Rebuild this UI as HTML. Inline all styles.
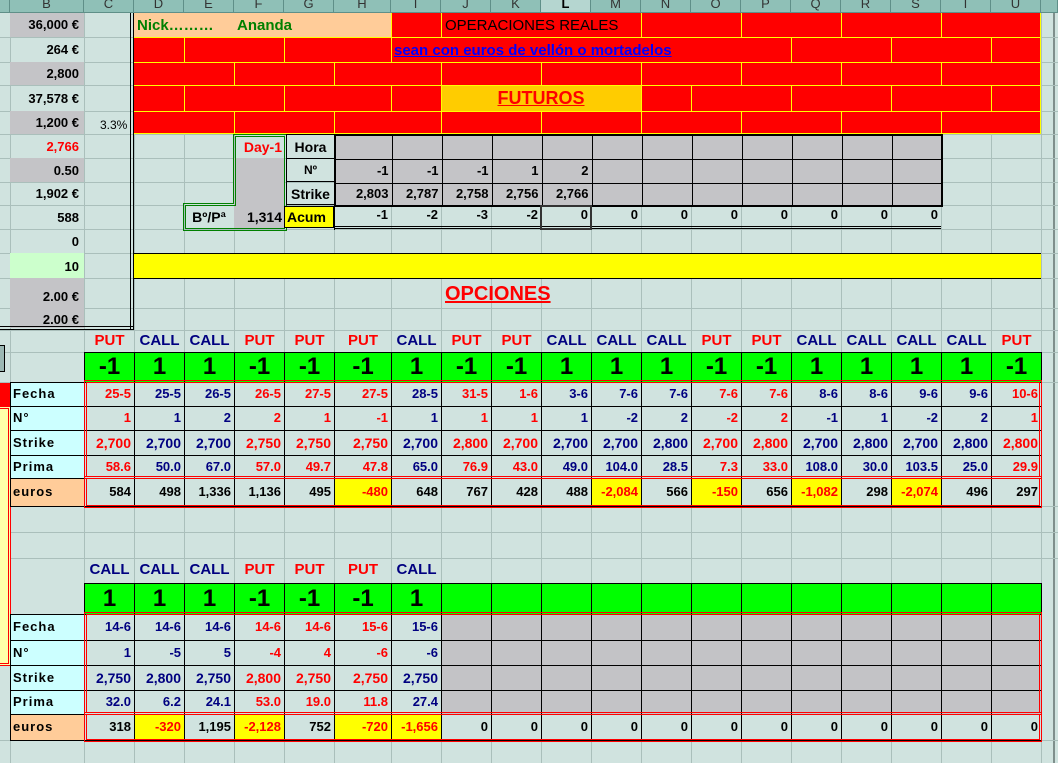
<!DOCTYPE html>
<html><head><meta charset="utf-8">
<style>
*{margin:0;padding:0;box-sizing:border-box}
body{width:1058px;height:763px;overflow:hidden;background:#d0e3df;position:relative;font:bold 13px "Liberation Sans",Arial,sans-serif;color:#000}
.a{position:absolute}
.v{position:absolute;width:1px;background:#aabfbb}
.h{position:absolute;height:1px;background:#aabfbb}
.yv{position:absolute;width:1px;background:#ffff00}
.yh{position:absolute;height:1px;background:#ffff00;left:134px;width:906px}
.hd{position:absolute;top:0;height:13px;background:#8fc0b7;border-right:1px solid #5f8f88;border-bottom:1px solid #5f8f88;overflow:hidden;text-align:center;font:13px "Liberation Sans",sans-serif;line-height:8px;color:#333}
.bc{position:absolute;left:10px;width:74px;text-align:right;padding-right:5px}
table{position:absolute;border-collapse:collapse;table-layout:fixed}
td{border:1px solid #000;padding:0 3px;text-align:right;white-space:nowrap;overflow:hidden;line-height:14px}
td.n{border:none}
tr.l td{border:none;text-align:center;font-size:15px}
tr.g td{background:#00ff00;text-align:center;font-size:24px;line-height:24px}
td.lb{background:#ccffff;text-align:left;letter-spacing:1px;padding-left:2px}
td.eu{background:#ffcc99;text-align:left;letter-spacing:1px;padding-left:2px}
.r{color:#ff0000}.b{color:#000080}
td.y{background:#ffff00;color:#ff0000}
td.gr{background:#c3c3c6}
.rf{position:absolute;border:3px double #ff0000}
</style></head><body>

<div class="v" style="left:10px;top:13px;height:750px"></div>
<div class="v" style="left:84px;top:13px;height:750px"></div>
<div class="v" style="left:134px;top:13px;height:750px"></div>
<div class="v" style="left:184px;top:13px;height:750px"></div>
<div class="v" style="left:234px;top:13px;height:750px"></div>
<div class="v" style="left:284px;top:13px;height:750px"></div>
<div class="v" style="left:334px;top:13px;height:750px"></div>
<div class="v" style="left:391px;top:13px;height:750px"></div>
<div class="v" style="left:441px;top:13px;height:750px"></div>
<div class="v" style="left:491px;top:13px;height:750px"></div>
<div class="v" style="left:541px;top:13px;height:750px"></div>
<div class="v" style="left:591px;top:13px;height:750px"></div>
<div class="v" style="left:641px;top:13px;height:750px"></div>
<div class="v" style="left:691px;top:13px;height:750px"></div>
<div class="v" style="left:741px;top:13px;height:750px"></div>
<div class="v" style="left:791px;top:13px;height:750px"></div>
<div class="v" style="left:841px;top:13px;height:750px"></div>
<div class="v" style="left:891px;top:13px;height:750px"></div>
<div class="v" style="left:941px;top:13px;height:750px"></div>
<div class="v" style="left:991px;top:13px;height:750px"></div>
<div class="v" style="left:1041px;top:13px;height:750px"></div>
<div class="a" style="left:1053px;top:13px;width:2px;height:750px;background:#7f8f8c"></div>
<div class="h" style="left:0;width:1058px;top:37px"></div>
<div class="h" style="left:0;width:1058px;top:62px"></div>
<div class="h" style="left:0;width:1058px;top:85px"></div>
<div class="h" style="left:0;width:1058px;top:111px"></div>
<div class="h" style="left:0;width:1058px;top:134px"></div>
<div class="h" style="left:0;width:1058px;top:158px"></div>
<div class="h" style="left:0;width:1058px;top:182px"></div>
<div class="h" style="left:0;width:1058px;top:205px"></div>
<div class="h" style="left:0;width:1058px;top:229px"></div>
<div class="h" style="left:0;width:1058px;top:253px"></div>
<div class="h" style="left:0;width:1058px;top:278px"></div>
<div class="h" style="left:0;width:1058px;top:308px"></div>
<div class="h" style="left:0;width:1058px;top:330px"></div>
<div class="h" style="left:0;width:1058px;top:352px"></div>
<div class="h" style="left:0;width:1058px;top:382px"></div>
<div class="h" style="left:0;width:1058px;top:506px"></div>
<div class="h" style="left:0;width:1058px;top:532px"></div>
<div class="h" style="left:0;width:1058px;top:558px"></div>
<div class="h" style="left:0;width:1058px;top:740px"></div>

<div class="hd" style="left:0;width:10px"></div>
<div class="hd" style="left:10px;width:74px">B</div>
<div class="hd" style="left:84px;width:50px">C</div>
<div class="hd" style="left:134px;width:50px">D</div>
<div class="hd" style="left:184px;width:50px">E</div>
<div class="hd" style="left:234px;width:50px">F</div>
<div class="hd" style="left:284px;width:50px">G</div>
<div class="hd" style="left:334px;width:57px">H</div>
<div class="hd" style="left:391px;width:50px">I</div>
<div class="hd" style="left:441px;width:50px">J</div>
<div class="hd" style="left:491px;width:50px">K</div>
<div class="hd" style="left:541px;width:50px;background:#b5d6d0;font-weight:bold;color:#000">L</div>
<div class="hd" style="left:591px;width:50px">M</div>
<div class="hd" style="left:641px;width:50px">N</div>
<div class="hd" style="left:691px;width:50px">O</div>
<div class="hd" style="left:741px;width:50px">P</div>
<div class="hd" style="left:791px;width:50px">Q</div>
<div class="hd" style="left:841px;width:50px">R</div>
<div class="hd" style="left:891px;width:50px">S</div>
<div class="hd" style="left:941px;width:50px">T</div>
<div class="hd" style="left:991px;width:50px">U</div>
<div class="hd" style="left:1041px;width:17px"></div>

<div class="a" style="left:10px;top:13px;width:74px;height:24px;background:#c4c4c7"></div>
<div class="a" style="left:10px;top:62px;width:74px;height:23px;background:#c4c4c7"></div>
<div class="a" style="left:10px;top:111px;width:74px;height:23px;background:#c4c4c7"></div>
<div class="a" style="left:10px;top:158px;width:74px;height:24px;background:#c4c4c7"></div>
<div class="a" style="left:10px;top:253px;width:74px;height:25px;background:#ccffcc"></div>
<div class="a" style="left:10px;top:278px;width:74px;height:50px;background:#c4c4c7"></div>
<div class="a" style="left:0;top:326px;width:134px;height:4px;border-top:1px solid #000;border-bottom:1px solid #000"></div>
<div class="a" style="left:130px;top:13px;width:4px;height:317px;border-left:1px solid #000;border-right:1px solid #000"></div>
<div class="bc" style="top:17px">36,000 €</div>
<div class="bc" style="top:42px">264 €</div>
<div class="bc" style="top:66px">2,800</div>
<div class="bc" style="top:91px">37,578 €</div>
<div class="bc" style="top:115px">1,200 €</div>
<div class="a" style="left:100px;top:118px;font:12px 'Liberation Sans',sans-serif">3.3%</div>
<div class="bc" style="top:139px;color:#ff0000">2,766</div>
<div class="bc" style="top:163px">0.50</div>
<div class="bc" style="top:186px">1,902 €</div>
<div class="bc" style="top:210px">588</div>
<div class="bc" style="top:234px">0</div>
<div class="bc" style="top:259px">10</div>
<div class="bc" style="top:289px">2.00 €</div>
<div class="bc" style="top:312px">2.00 €</div>

<div class="a" style="left:134px;top:13px;width:906px;height:121px;background:#ff0000"></div>
<div class="a" style="left:134px;top:13px;width:257px;height:24px;background:#ffcc99"></div>
<div class="a" style="left:441px;top:85px;width:200px;height:26px;background:#ffcc00"></div>
<div class="yh" style="top:37px"></div>
<div class="yh" style="top:62px"></div>
<div class="yh" style="top:85px"></div>
<div class="yh" style="top:111px"></div>
<div class="yh" style="top:133px"></div>
<div class="yv" style="left:1040px;top:13px;height:121px"></div>
<div class="yv" style="left:391px;top:13px;height:24px"></div>
<div class="yv" style="left:441px;top:13px;height:24px"></div>
<div class="yv" style="left:641px;top:13px;height:24px"></div>
<div class="yv" style="left:741px;top:13px;height:24px"></div>
<div class="yv" style="left:841px;top:13px;height:24px"></div>
<div class="yv" style="left:941px;top:13px;height:24px"></div>
<div class="yv" style="left:184px;top:37px;height:25px"></div>
<div class="yv" style="left:284px;top:37px;height:25px"></div>
<div class="yv" style="left:391px;top:37px;height:25px"></div>
<div class="yv" style="left:791px;top:37px;height:25px"></div>
<div class="yv" style="left:891px;top:37px;height:25px"></div>
<div class="yv" style="left:991px;top:37px;height:25px"></div>
<div class="yv" style="left:234px;top:62px;height:23px"></div>
<div class="yv" style="left:334px;top:62px;height:23px"></div>
<div class="yv" style="left:441px;top:62px;height:23px"></div>
<div class="yv" style="left:541px;top:62px;height:23px"></div>
<div class="yv" style="left:641px;top:62px;height:23px"></div>
<div class="yv" style="left:741px;top:62px;height:23px"></div>
<div class="yv" style="left:841px;top:62px;height:23px"></div>
<div class="yv" style="left:941px;top:62px;height:23px"></div>
<div class="yv" style="left:184px;top:85px;height:26px"></div>
<div class="yv" style="left:284px;top:85px;height:26px"></div>
<div class="yv" style="left:391px;top:85px;height:26px"></div>
<div class="yv" style="left:441px;top:85px;height:26px"></div>
<div class="yv" style="left:641px;top:85px;height:26px"></div>
<div class="yv" style="left:691px;top:85px;height:26px"></div>
<div class="yv" style="left:791px;top:85px;height:26px"></div>
<div class="yv" style="left:891px;top:85px;height:26px"></div>
<div class="yv" style="left:991px;top:85px;height:26px"></div>
<div class="yv" style="left:234px;top:111px;height:23px"></div>
<div class="yv" style="left:334px;top:111px;height:23px"></div>
<div class="yv" style="left:441px;top:111px;height:23px"></div>
<div class="yv" style="left:541px;top:111px;height:23px"></div>
<div class="yv" style="left:641px;top:111px;height:23px"></div>
<div class="yv" style="left:741px;top:111px;height:23px"></div>
<div class="yv" style="left:841px;top:111px;height:23px"></div>
<div class="yv" style="left:941px;top:111px;height:23px"></div>
<div class="a" style="left:137px;top:17px;color:#008000;font-size:15px">Nick………</div>
<div class="a" style="left:237px;top:17px;color:#008000;font-size:15px">Ananda</div>
<div class="a" style="left:445px;top:17px;font:15px 'Liberation Sans',sans-serif">OPERACIONES REALES</div>
<div class="a" style="left:394px;top:42px;color:#0000ff;font-size:15px;text-decoration:underline">sean con euros de vellón o mortadelos</div>
<div class="a" style="left:441px;top:88px;width:200px;text-align:center;color:#ff0000;font-size:18px;text-decoration:underline">FUTUROS</div>

<div class="a" style="left:234px;top:158px;width:50px;height:47px;background:#c4c4c7"></div>
<div class="a" style="left:234px;top:205px;width:50px;height:24px;background:#c4c4c7"></div>
<svg class="a" style="left:0;top:0" width="400" height="240"><path d="M233.5 134.5H286.5V230.5H183.5V203.5H233.5Z M235.5 136.5H284.5V228.5H185.5V205.5H235.5Z" fill="none" stroke="#008000" stroke-width="1"/></svg>
<div class="a" style="left:234px;top:139px;width:48px;text-align:right;color:#ff0000;font-size:14px">Day-1</div>
<div class="a" style="left:186px;top:209px;width:46px;text-align:center;font-size:14px">Bº/Pª</div>
<div class="a" style="left:234px;top:209px;width:48px;text-align:right;font-size:14px">1,314</div>
<div class="a" style="left:286px;top:134px;width:49px;height:71px;border:1px solid #000"></div>
<div class="a" style="left:286px;top:158px;width:49px;height:24px;border-top:1px solid #000;border-bottom:1px solid #000"></div>
<div class="a" style="left:288px;top:139px;width:45px;text-align:center;font-size:14px">Hora</div>
<div class="a" style="left:288px;top:163px;width:45px;text-align:center;font-size:12px">Nº</div>
<div class="a" style="left:286px;top:186px;width:49px;text-align:center;font-size:14px">Strike</div>
<div class="a" style="left:284px;top:206px;width:50px;height:22px;background:#ffff00;border:1px solid #000;font-size:14px;padding:2px 0 0 2px">Acum</div>
<table style="left:334px;top:134px;width:607px;background:#c4c4c7;border:2px solid #000">
<colgroup><col style="width:57px"><col span="11" style="width:50px"></colgroup>
<tr style="height:24px"><td></td><td></td><td></td><td></td><td></td><td></td><td></td><td></td><td></td><td></td><td></td><td></td></tr>
<tr style="height:24px"><td>-1</td><td>-1</td><td>-1</td><td>1</td><td>2</td><td></td><td></td><td></td><td></td><td></td><td></td><td></td></tr>
<tr style="height:23px"><td>2,803</td><td>2,787</td><td>2,758</td><td>2,756</td><td>2,766</td><td></td><td></td><td></td><td></td><td></td><td></td><td></td></tr>
</table>
<table style="left:334px;top:205px;width:607px;border-bottom:3px double #000">
<colgroup><col style="width:57px"><col span="11" style="width:50px"></colgroup>
<tr style="height:22px"><td class="n">-1</td><td class="n">-2</td><td class="n">-3</td><td class="n">-2</td><td class="n">0</td><td class="n">0</td><td class="n">0</td><td class="n">0</td><td class="n">0</td><td class="n">0</td><td class="n">0</td><td class="n">0</td></tr>
</table>
<div class="a" style="left:334px;top:205px;width:1px;height:25px;background:#000"></div>
<div class="a" style="left:540px;top:205px;width:52px;height:25px;border:2px solid #333"></div>

<div class="a" style="left:134px;top:253px;width:907px;height:26px;background:#ffff00;border-top:1px solid #000;border-bottom:1px solid #000"></div>
<div class="a" style="left:445px;top:283px;color:#ff0000;font-size:20px;text-decoration:underline">OPCIONES</div>

<div class="a" style="left:-3px;top:345px;width:8px;height:27px;background:#9cb8b4;border:1px solid #000"></div>
<div class="a" style="left:0;top:383px;width:10px;height:23px;background:#ff0000"></div>
<div class="a" style="left:0;top:406px;width:11px;height:260px;background:#ffffaa;border:3px double #ff0000;border-left:none"></div>

<table style="left:10px;top:330px;width:1031px">
<colgroup><col style="width:74px"><col span="5" style="width:50px"><col style="width:57px"><col span="13" style="width:50px"></colgroup>
<tr class="l" style="height:22px"><td></td><td class="r">PUT</td><td class="b">CALL</td><td class="b">CALL</td><td class="r">PUT</td><td class="r">PUT</td><td class="r">PUT</td><td class="b">CALL</td><td class="r">PUT</td><td class="r">PUT</td><td class="b">CALL</td><td class="b">CALL</td><td class="b">CALL</td><td class="r">PUT</td><td class="r">PUT</td><td class="b">CALL</td><td class="b">CALL</td><td class="b">CALL</td><td class="b">CALL</td><td class="r">PUT</td></tr>
<tr class="g" style="height:30px"><td class="n" style="background:none"></td><td>-1</td><td>1</td><td>1</td><td>-1</td><td>-1</td><td>-1</td><td>1</td><td>-1</td><td>-1</td><td>1</td><td>1</td><td>1</td><td>-1</td><td>-1</td><td>1</td><td>1</td><td>1</td><td>1</td><td>-1</td></tr>
<tr style="height:24px"><td class="lb">Fecha</td><td class="r">25-5</td><td class="b">25-5</td><td class="b">26-5</td><td class="r">26-5</td><td class="r">27-5</td><td class="r">27-5</td><td class="b">28-5</td><td class="r">31-5</td><td class="r">1-6</td><td class="b">3-6</td><td class="b">7-6</td><td class="b">7-6</td><td class="r">7-6</td><td class="r">7-6</td><td class="b">8-6</td><td class="b">8-6</td><td class="b">9-6</td><td class="b">9-6</td><td class="r">10-6</td></tr>
<tr style="height:24px"><td class="lb">N°</td><td class="r">1</td><td class="b">1</td><td class="b">2</td><td class="r">2</td><td class="r">1</td><td class="r">-1</td><td class="b">1</td><td class="r">1</td><td class="r">1</td><td class="b">1</td><td class="b">-2</td><td class="b">2</td><td class="r">-2</td><td class="r">2</td><td class="b">-1</td><td class="b">1</td><td class="b">-2</td><td class="b">2</td><td class="r">1</td></tr>
<tr style="height:25px;font-size:14px"><td class="lb" style="font-size:13px">Strike</td><td class="r">2,700</td><td class="b">2,700</td><td class="b">2,700</td><td class="r">2,750</td><td class="r">2,750</td><td class="r">2,750</td><td class="b">2,700</td><td class="r">2,800</td><td class="r">2,700</td><td class="b">2,700</td><td class="b">2,700</td><td class="b">2,800</td><td class="r">2,700</td><td class="r">2,800</td><td class="b">2,700</td><td class="b">2,800</td><td class="b">2,700</td><td class="b">2,800</td><td class="r">2,800</td></tr>
<tr style="height:23px"><td class="lb">Prima</td><td class="r">58.6</td><td class="b">50.0</td><td class="b">67.0</td><td class="r">57.0</td><td class="r">49.7</td><td class="r">47.8</td><td class="b">65.0</td><td class="r">76.9</td><td class="r">43.0</td><td class="b">49.0</td><td class="b">104.0</td><td class="b">28.5</td><td class="r">7.3</td><td class="r">33.0</td><td class="b">108.0</td><td class="b">30.0</td><td class="b">103.5</td><td class="b">25.0</td><td class="r">29.9</td></tr>
<tr style="height:28px"><td class="eu">euros</td><td>584</td><td>498</td><td>1,336</td><td>1,136</td><td>495</td><td class="y">-480</td><td>648</td><td>767</td><td>428</td><td>488</td><td class="y">-2,084</td><td>566</td><td class="y">-150</td><td>656</td><td class="y">-1,082</td><td>298</td><td class="y">-2,074</td><td>496</td><td>297</td></tr>
</table>
<div class="rf" style="left:84px;top:380px;width:958px;height:99px"></div>
<div class="rf" style="left:84px;top:476px;width:958px;height:32px"></div>

<table style="left:10px;top:558px;width:1031px">
<colgroup><col style="width:74px"><col span="5" style="width:50px"><col style="width:57px"><col span="13" style="width:50px"></colgroup>
<tr class="l" style="height:25px"><td></td><td class="b">CALL</td><td class="b">CALL</td><td class="b">CALL</td><td class="r">PUT</td><td class="r">PUT</td><td class="r">PUT</td><td class="b">CALL</td><td></td><td></td><td></td><td></td><td></td><td></td><td></td><td></td><td></td><td></td><td></td><td></td></tr>
<tr class="g" style="height:31px"><td class="n" style="background:none"></td><td>1</td><td>1</td><td>1</td><td>-1</td><td>-1</td><td>-1</td><td>1</td><td></td><td></td><td></td><td></td><td></td><td></td><td></td><td></td><td></td><td></td><td></td><td></td></tr>
<tr style="height:26px"><td class="lb">Fecha</td><td class="b">14-6</td><td class="b">14-6</td><td class="b">14-6</td><td class="r">14-6</td><td class="r">14-6</td><td class="r">15-6</td><td class="b">15-6</td><td class="gr"></td><td class="gr"></td><td class="gr"></td><td class="gr"></td><td class="gr"></td><td class="gr"></td><td class="gr"></td><td class="gr"></td><td class="gr"></td><td class="gr"></td><td class="gr"></td><td class="gr"></td></tr>
<tr style="height:25px"><td class="lb">N°</td><td class="b">1</td><td class="b">-5</td><td class="b">5</td><td class="r">-4</td><td class="r">4</td><td class="r">-6</td><td class="b">-6</td><td class="gr"></td><td class="gr"></td><td class="gr"></td><td class="gr"></td><td class="gr"></td><td class="gr"></td><td class="gr"></td><td class="gr"></td><td class="gr"></td><td class="gr"></td><td class="gr"></td><td class="gr"></td></tr>
<tr style="height:25px;font-size:14px"><td class="lb" style="font-size:13px">Strike</td><td class="b">2,750</td><td class="b">2,800</td><td class="b">2,750</td><td class="r">2,800</td><td class="r">2,750</td><td class="r">2,750</td><td class="b">2,750</td><td class="gr"></td><td class="gr"></td><td class="gr"></td><td class="gr"></td><td class="gr"></td><td class="gr"></td><td class="gr"></td><td class="gr"></td><td class="gr"></td><td class="gr"></td><td class="gr"></td><td class="gr"></td></tr>
<tr style="height:24px"><td class="lb">Prima</td><td class="b">32.0</td><td class="b">6.2</td><td class="b">24.1</td><td class="r">53.0</td><td class="r">19.0</td><td class="r">11.8</td><td class="b">27.4</td><td class="gr"></td><td class="gr"></td><td class="gr"></td><td class="gr"></td><td class="gr"></td><td class="gr"></td><td class="gr"></td><td class="gr"></td><td class="gr"></td><td class="gr"></td><td class="gr"></td><td class="gr"></td></tr>
<tr style="height:26px"><td class="eu">euros</td><td>318</td><td class="y">-320</td><td>1,195</td><td class="y">-2,128</td><td>752</td><td class="y">-720</td><td class="y">-1,656</td><td>0</td><td>0</td><td>0</td><td>0</td><td>0</td><td>0</td><td>0</td><td>0</td><td>0</td><td>0</td><td>0</td><td>0</td></tr>
</table>
<div class="rf" style="left:84px;top:612px;width:958px;height:103px"></div>
<div class="rf" style="left:84px;top:712px;width:958px;height:30px"></div>
</body></html>
